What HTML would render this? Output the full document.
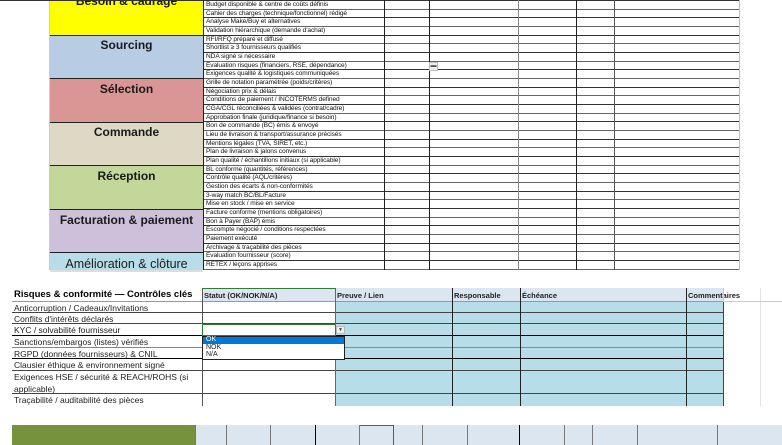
<!DOCTYPE html>
<html><head><meta charset="utf-8"><style>
*{margin:0;padding:0;box-sizing:border-box}
body{width:782px;height:445px;overflow:hidden;background:#fff;position:relative;font-family:"Liberation Sans",sans-serif}
.a{position:absolute}
.cat{position:absolute;left:50px;width:153px;font-weight:bold;font-size:12px;text-align:center;color:#1a1a1a;border-bottom:1px solid #222}
.rows{position:absolute;left:203px;top:1px;width:536px}
.r{height:8.68px;border-bottom:1px solid #333;font-size:6.6px;line-height:8px;padding-left:3px;color:#111;white-space:nowrap;overflow:hidden;width:536px;letter-spacing:-0.1px}
.r:nth-child(odd){border-bottom-color:#666}
.v{position:absolute;top:0;height:270px;width:1px;background:#222}
.b{position:absolute;left:12px;width:711px;border-bottom:1px solid #444;font-size:8.5px;color:#222}
.b span{position:absolute;left:2px}
.tc{position:absolute;left:335px;width:388px;background:#b7dee8}
.bv{position:absolute;top:288px;height:118px;width:1px;background:#222}
.fc{position:absolute;top:425px;height:20px;background:#dce6f1;border-left:1px solid #777}
</style></head><body>
<div class="a" style="left:0;top:0;width:50px;height:270px;border-right:1px solid #ccc"></div>
<div class="cat" style="top:-10px;height:46px;background:#ffff00;line-height:22px">Besoin &amp; cadrage</div>
<div class="cat" style="top:36px;height:43px;background:#b8cce4;line-height:19px">Sourcing</div>
<div class="cat" style="top:79px;height:44px;background:#da9694;line-height:21px">Sélection</div>
<div class="cat" style="top:123px;height:43px;background:#ddd9c4;line-height:19px">Commande</div>
<div class="cat" style="top:166px;height:44px;background:#c4d79b;line-height:21px">Réception</div>
<div class="cat" style="top:210px;height:43px;background:#ccc0da;line-height:20px">Facturation &amp; paiement</div>
<div class="cat" style="top:253px;height:17px;background:#b7dee8;line-height:22px;font-weight:normal;font-size:12.5px;overflow:hidden;border:none">Amélioration &amp; clôture</div>
<div class="a" style="left:0;top:-1px;width:739px;height:2px;border-bottom:1px solid #333"></div>
<div class="rows">
<div class="r">Budget disponible &amp; centre de coûts définis</div>
<div class="r">Cahier des charges (technique/fonctionnel) rédigé</div>
<div class="r">Analyse Make/Buy et alternatives</div>
<div class="r">Validation hiérarchique (demande d'achat)</div>
<div class="r">RFI/RFQ préparé et diffusé</div>
<div class="r">Shortlist ≥ 3 fournisseurs qualifiés</div>
<div class="r">NDA signé si nécessaire</div>
<div class="r">Évaluation risques (financiers, RSE, dépendance)</div>
<div class="r">Exigences qualité &amp; logistiques communiquées</div>
<div class="r">Grille de notation paramétrée (poids/critères)</div>
<div class="r">Négociation prix &amp; délais</div>
<div class="r">Conditions de paiement / INCOTERMS defined</div>
<div class="r">CGA/CGL réconciliées &amp; validées (contrat/cadre)</div>
<div class="r">Approbation finale (juridique/finance si besoin)</div>
<div class="r">Bon de commande (BC) émis &amp; envoyé</div>
<div class="r">Lieu de livraison &amp; transport/assurance précisés</div>
<div class="r">Mentions légales (TVA, SIRET, etc.)</div>
<div class="r">Plan de livraison &amp; jalons convenus</div>
<div class="r">Plan qualité / échantillons initiaux (si applicable)</div>
<div class="r">BL conforme (quantités, références)</div>
<div class="r">Contrôle qualité (AQL/critères)</div>
<div class="r">Gestion des écarts &amp; non-conformités</div>
<div class="r">3-way match BC/BL/Facture</div>
<div class="r">Mise en stock / mise en service</div>
<div class="r">Facture conforme (mentions obligatoires)</div>
<div class="r">Bon à Payer (BAP) émis</div>
<div class="r">Escompte négocié / conditions respectées</div>
<div class="r">Paiement exécuté</div>
<div class="r">Archivage &amp; traçabilité des pièces</div>
<div class="r">Évaluation fournisseur (score)</div>
<div class="r">RETEX / leçons apprises</div>
</div>
<div class="v" style="left:203px"></div>
<div class="v" style="left:384px"></div>
<div class="v" style="left:429px"></div>
<div class="v" style="left:518px;background:#888"></div>
<div class="v" style="left:576px"></div>
<div class="v" style="left:614px;background:#555"></div>
<div class="v" style="left:739px;background:#bbb"></div>
<div class="a" style="left:429px;top:62px;width:9px;height:9px;background:#eee;border:1px solid #bbb;font-size:6px;line-height:6px;text-align:center;color:#555">▬</div>
<div class="a" style="left:50px;top:270px;width:153px;height:2px;background:#ddd"></div>

<div class="a" style="left:202px;top:288px;width:521px;height:14px;background:#dce6f1"></div>
<div class="tc" style="top:302px;height:104px"></div>
<div class="b" style="top:288px;height:14px;border-bottom-color:#999"><span style="font-weight:bold;font-size:9.5px;top:1px;color:#000">Risques &amp; conformité — Contrôles clés</span>
<span style="left:192px;top:3px;font-weight:bold;font-size:7.5px">Statut (OK/NOK/N/A)</span>
<span style="left:325px;top:3px;font-weight:bold;font-size:7.5px">Preuve / Lien</span>
<span style="left:442px;top:3px;font-weight:bold;font-size:7.5px">Responsable</span>
<span style="left:510px;top:3px;font-weight:bold;font-size:7.5px">Échéance</span>
<span style="left:676px;top:3px;font-weight:bold;font-size:7.5px">Commentaires</span></div>
<div class="b" style="top:302px;height:11px"><span style="top:1px">Anticorruption / Cadeaux/Invitations</span></div>
<div class="b" style="top:313px;height:11px"><span style="top:1px">Conflits d'intérêts déclarés</span></div>
<div class="b" style="top:324px;height:12px;border-bottom-color:#000"><span style="top:1px">KYC / solvabilité fournisseur</span></div>
<div class="b" style="top:336px;height:12px;border-bottom-color:#888"><span style="top:1px">Sanctions/embargos (listes) vérifiés</span></div>
<div class="b" style="top:348px;height:11px;border-bottom-color:#000"><span style="top:1px">RGPD (données fournisseurs) &amp; CNIL</span></div>
<div class="b" style="top:359px;height:12px"><span style="top:1px">Clausier éthique &amp; environnement signé</span></div>
<div class="b" style="top:371px;height:23px"><span style="top:1px;line-height:11.5px;width:190px">Exigences HSE / sécurité &amp; REACH/ROHS (si applicable)</span></div>
<div class="b" style="top:394px;height:12px;border-bottom:none"><span style="top:1px">Traçabilité / auditabilité des pièces</span></div>
<div class="bv" style="left:202px;top:288px;background:#555"></div>
<div class="bv" style="left:335px;background:#666"></div>
<div class="bv" style="left:452px"></div>
<div class="bv" style="left:520px"></div>
<div class="bv" style="left:686px"></div>
<div class="bv" style="left:723px;top:302px;height:104px;background:#444"></div>
<div class="a" style="left:723px;top:288px;width:1px;height:14px;background:#ccc"></div>
<div class="a" style="left:760px;top:288px;width:1px;height:118px;background:#e4e4e4"></div>
<div class="a" style="left:723px;top:301px;width:59px;height:1px;background:#ccc"></div>
<div class="a" style="left:202px;top:288px;width:134px;height:1px;background:#2e7d32"></div>
<div class="a" style="left:202px;top:324px;width:134px;height:12px;border:1px solid #2e7d32;background:#fff"></div>
<div class="a" style="left:336px;top:326px;width:9px;height:8px;background:#eee;border:1px solid #bbb;font-size:5px;line-height:6px;text-align:center;color:#444">▼</div>
<div class="a" style="left:202px;top:336px;width:143px;height:24px;background:#fff;border:1px solid #222"></div>
<div class="a" style="left:203px;top:337px;width:141px;height:7px;background:#0078d7"></div>
<div class="a" style="left:206px;top:336px;font-size:7px;line-height:7.5px;color:#222"><div style="color:#fff">OK</div><div>NOK</div><div>N/A</div></div>

<div class="a" style="left:12px;top:425px;width:183px;height:20px;background:#76923c"></div>
<div class="fc" style="left:195px;width:31px"></div>
<div class="fc" style="left:226px;width:44px"></div>
<div class="fc" style="left:270px;width:45px"></div>
<div class="fc" style="left:315px;width:44px;border-left-color:#000"></div>
<div class="fc" style="left:359px;width:34px;border-top:1px solid #2e7d32"></div>
<div class="fc" style="left:393px;width:29px;border-left-color:#2e7d32"></div>
<div class="fc" style="left:422px;width:45px"></div>
<div class="fc" style="left:467px;width:52px"></div>
<div class="fc" style="left:519px;width:45px;border-left-color:#000"></div>
<div class="fc" style="left:564px;width:28px"></div>
<div class="fc" style="left:592px;width:45px"></div>
<div class="fc" style="left:637px;width:80px"></div>
<div class="fc" style="left:717px;width:65px"></div>
</body></html>
